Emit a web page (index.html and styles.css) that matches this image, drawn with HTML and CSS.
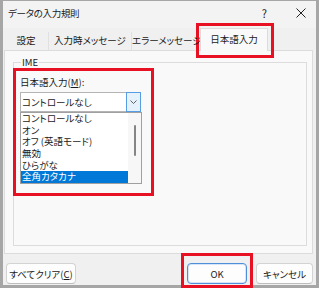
FILE: index.html
```html
<!DOCTYPE html>
<html lang="ja">

<head>
    <meta charset="UTF-8">
    <title>データの入力規則</title>
    <link rel="stylesheet" href="styles.css">
</head>

<body>
    <div class="window">
        <div class="titlebar">
            <span class="title">データの入力規則</span>
            <span class="help">?</span>
            <svg class="close" width="10" height="10" viewBox="0 0 10 10">
                <path d="M0.5 0.5 L9.5 9.5 M9.5 0.5 L0.5 9.5" stroke="#222" stroke-width="1" fill="none" />
            </svg>
        </div>

        <div class="tabs">
            <div class="tab tab-1">設定</div>
            <div class="tab tab-2">入力時メッセージ</div>
            <div class="tab tab-3">エラーメッセージ</div>
            <div class="tab selected">日本語入力</div>
        </div>

        <div class="panel">
            <fieldset class="group">
                <legend>IME</legend>
                <label class="field-label">日本語入力(<u>M</u>):</label>
                <div class="combo">
                    <span class="combo-text">コントロールなし</span>
                    <span class="combo-btn">
                        <svg width="7" height="4" viewBox="0 0 7 4">
                            <polyline points="0.5,0.5 3.5,3.5 6.5,0.5" stroke="#606060" stroke-width="1" fill="none" />
                        </svg>
                    </span>
                </div>
                <div class="listbox">
                    <ul class="items">
                        <li>コントロールなし</li>
                        <li>オン</li>
                        <li>オフ (英語モード)</li>
                        <li>無効</li>
                        <li>ひらがな</li>
                        <li class="active">全角カタカナ</li>
                    </ul>
                    <div class="scrollbar"><span class="thumb"></span></div>
                </div>
            </fieldset>
        </div>

        <div class="footer">
            <button class="btn btn-clear">すべてクリア(<u>C</u>)</button>
            <span class="spacer"></span>
            <button class="btn btn-ok">OK</button>
            <button class="btn btn-cancel">キャンセル</button>
        </div>
    </div>

    <!-- 赤枠の注釈 -->
    <div class="mark mark-tab"></div>
    <div class="mark mark-group"></div>
    <div class="mark mark-ok"></div>
</body>

</html>
```

FILE: styles.css
```css
body {
    margin: 0;
    background-color: #a6a6a6;
    font-family: "Noto Sans CJK JP", "Noto Sans", sans-serif;
    font-size: 9.5px;
    font-feature-settings: "palt";
    color: #1a1a1a;
}

.window {
    width: 319px;
    height: 288px;
    box-sizing: border-box;
    border: 3px solid #a6a6a6;
    border-top-width: 1px;
    background-color: #f0f0f0;
    display: flex;
    flex-direction: column;
}

.titlebar {
    height: 27px;
    display: flex;
    align-items: center;
    padding: 0 10px 4px 5px;
    box-sizing: border-box;
    background-color: #f3f3f3;
}

.title {
    flex: 1;
    font-size: 9.5px;
    letter-spacing: -0.3px;
}

.help {
    font-size: 11px;
    margin-right: 29px;
    color: #222;
}

.tabs {
    height: 22px;
    display: flex;
    align-items: flex-end;
    margin-left: 1px;
    position: relative;
    z-index: 1;
}

.tab {
    height: 18px;
    line-height: 17px;
    box-sizing: border-box;
    text-align: center;
    white-space: nowrap;
    border-right: 1px solid #e0e0e0;
}

.tab-1 {
    width: 45px;
}

.tab-2 {
    width: 83px;
}

.tab-3 {
    width: 68px;
    border-right: none;
}

.tab.selected {
    width: 68px;
    height: 23px;
    line-height: 20px;
    margin-bottom: -1px;
    background-color: #f9f9f9;
    border: 1px solid #dcdcdc;
    border-bottom: none;
}

.panel {
    height: 204px;
    margin: 0 3px 0 1px;
    box-sizing: border-box;
    border: 1px solid #dcdcdc;
    background-color: #f9f9f9;
    padding: 5px 5px 0 8px;
}

.group {
    margin: 0;
    padding: 0 0 0 6px;
    height: 190px;
    box-sizing: border-box;
    border: 1px solid #dcdcdc;
}

.group legend {
    padding: 0 1px;
    margin-left: 1px;
    line-height: 12px;
}

.field-label {
    display: block;
    line-height: 14px;
    margin-top: 7px;
}

.combo {
    width: 121px;
    height: 20px;
    margin-top: 3px;
    box-sizing: border-box;
    border: 1px solid #b4b4b4;
    background-color: #fff;
    display: flex;
    align-items: stretch;
}

.combo-text {
    flex: 1;
    line-height: 18px;
    padding-left: 1px;
}

.combo-btn {
    width: 13px;
    margin: -1px -1px -1px 0;
    border: 1px solid #569de5;
    background-color: #e5f1fb;
    display: flex;
    align-items: center;
    justify-content: center;
}

.listbox {
    width: 122px;
    height: 72px;
    box-sizing: border-box;
    border: 1px solid #a0a0a0;
    background-color: #fff;
    display: flex;
}

.items {
    list-style: none;
    margin: 0;
    padding: 0;
    flex: 1;
}

.items li {
    height: 11.667px;
    line-height: 11.667px;
    padding-left: 1px;
    white-space: nowrap;
}

.items li.active {
    background-color: #0078d7;
    color: #fff;
}

.scrollbar {
    width: 13px;
    background-color: #f7f7f7;
    display: flex;
    justify-content: center;
    padding-top: 12px;
}

.thumb {
    width: 2px;
    height: 31px;
    border-radius: 1px;
    background-color: #858585;
}

.footer {
    flex: 1;
    display: flex;
    align-items: flex-start;
    padding: 9px 3px 0 3px;
}

.spacer {
    flex: 1;
}

.btn {
    height: 21px;
    padding: 0;
    font-family: inherit;
    font-size: 9.5px;
    font-feature-settings: "palt";
    color: #1a1a1a;
    background-color: #fdfdfd;
    border: 1px solid #d3d3d3;
    border-bottom-color: #bdbdbd;
    border-radius: 4px;
}

.btn-clear {
    width: 70px;
}

.btn-ok {
    width: 60px;
    margin-right: 9px;
    border: 1px solid #4f8ed8;
    box-shadow: inset 0 0 0 1px #d6e6f8;
}

.btn-cancel {
    width: 57px;
}

.mark {
    position: absolute;
    box-sizing: border-box;
    border: 3px solid #e81123;
}

.mark-tab {
    left: 196px;
    top: 23px;
    width: 78px;
    height: 35px;
}

.mark-group {
    left: 13px;
    top: 68px;
    width: 141px;
    height: 128px;
}

.mark-ok {
    left: 181px;
    top: 253px;
    width: 72px;
    height: 35px;
}
```
